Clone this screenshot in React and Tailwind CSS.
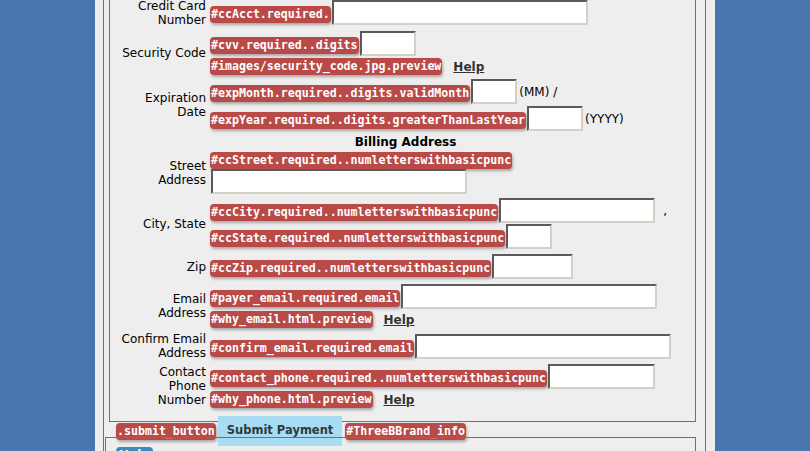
const Tag = ({ children, className = '' }) => (
  <span className={`inline-block whitespace-nowrap rounded-[4px] bg-[#b94a48] px-[1px] font-['DejaVu_Sans_Mono',monospace] text-[11.6px] font-bold leading-[17px] text-white shadow-[1px_2px_3px_rgba(0,0,0,0.3)] ${className}`}>
    {children}
  </span>
)

const Field = ({ className }) => (
  <input
    type="text"
    readOnly
    className={`ml-[1px] block h-[25px] border-2 border-solid border-[#d4d0c8] border-l-[#5a5a5a] border-t-[#5a5a5a] bg-white ${className}`}
  />
)

const Help = () => (
  <a className="ml-[11px] font-bold leading-[14px] text-[#333] underline">Help</a>
)

const Line = ({ className = '', children }) => (
  <div className={`flex items-end ${className}`}>{children}</div>
)

const Row = ({ label, className = '', labelClass = '', children }) => (
  <div className={`flex items-center ${className}`}>
    <div className={`w-[96px] shrink-0 whitespace-nowrap text-right leading-[14px] ${labelClass}`}>{label}</div>
    <div className="ml-[4px] flex flex-col items-start">{children}</div>
  </div>
)

export default function App() {
  return (
    <div className="h-[451px] overflow-hidden bg-[#4a76b0] font-['DejaVu_Sans',Verdana,sans-serif] text-[12px] text-black">
      <div className="ml-[95px] h-full w-[620px] bg-[#eeeeee] pl-[8px] pr-[9px]">
        <div className="h-full border-x border-[#3f7fb0] pl-[5px] pr-[9px]">
          <div className="border-x border-b border-[#3f7fb0] pb-[13px]">
            <Row label={<>Credit Card<br />Number</>} labelClass="-my-[2px]">
              <Line>
                <Tag className="mb-[2px]">#ccAcct.required.</Tag>
                <Field className="w-[256px]" />
              </Line>
            </Row>

            <Row label="Security Code" className="mt-[6px]">
              <Line>
                <Tag className="mb-[2px]">#cvv.required..digits</Tag>
                <Field className="w-[56px]" />
              </Line>
              <div className="mt-[2px] flex items-center">
                <Tag>#images/security_code.jpg.preview</Tag>
                <Help />
              </div>
            </Row>

            <Row label={<>Expiration<br />Date</>} className="mt-[4px]">
              <Line>
                <Tag className="mb-[2px]">#expMonth.required..digits.validMonth</Tag>
                <Field className="w-[46px]" />
                <span className="mb-[5px] ml-[2px] leading-[14px]">(MM) /</span>
              </Line>
              <Line className="mt-[2px]">
                <Tag className="mb-[2px]">#expYear.required..digits.greaterThanLastYear</Tag>
                <Field className="w-[56px]" />
                <span className="mb-[5px] ml-[2px] leading-[14px]">(YYYY)</span>
              </Line>
            </Row>

            <div className="mt-[4px] pl-[6px] text-center font-bold leading-[14px]">Billing Address</div>

            <Row label={<>Street<br />Address</>} className="mt-[3px]">
              <Tag>#ccStreet.required..numletterswithbasicpunc</Tag>
              <Field className="ml-0 w-[256px]" />
            </Row>

            <Row label="City, State" className="mt-[4px]">
              <Line>
                <Tag className="mb-[2px]">#ccCity.required..numletterswithbasicpunc</Tag>
                <Field className="w-[156px]" />
                <span className="mb-[5px] ml-[8px] leading-[14px]">,</span>
              </Line>
              <Line className="mt-[1px]">
                <Tag className="mb-[2px]">#ccState.required..numletterswithbasicpunc</Tag>
                <Field className="w-[46px]" />
              </Line>
            </Row>

            <Row label="Zip" className="mt-[5px]">
              <Line>
                <Tag className="mb-[2px]">#ccZip.required..numletterswithbasicpunc</Tag>
                <Field className="w-[81px]" />
              </Line>
            </Row>

            <Row label={<>Email<br />Address</>} className="mt-[5px]">
              <Line>
                <Tag className="mb-[2px]">#payer_email.required.email</Tag>
                <Field className="w-[256px]" />
              </Line>
              <div className="mt-[2px] flex items-center">
                <Tag>#why_email.html.preview</Tag>
                <Help />
              </div>
            </Row>

            <Row label={<>Confirm Email<br />Address</>} className="mt-[4px]">
              <Line>
                <Tag className="mb-[2px]">#confirm_email.required.email</Tag>
                <Field className="w-[256px]" />
              </Line>
            </Row>

            <Row label={<>Contact<br />Phone<br />Number</>} className="mt-[4px]">
              <Line>
                <Tag className="mb-[2px]">#contact_phone.required..numletterswithbasicpunc</Tag>
                <Field className="w-[107px]" />
              </Line>
              <div className="mt-[2px] flex items-center">
                <Tag>#why_phone.html.preview</Tag>
                <Help />
              </div>
            </Row>
          </div>

          <div className="-mt-[6px] flex items-center pl-[7px]">
            <Tag>.submit_button</Tag>
            <button className="ml-[2px] h-[30px] bg-[#a8dcf2] px-[9px] text-[11.5px] font-bold text-[#2b3b3b]">
              Submit Payment
            </button>
            <Tag className="ml-[3px]">#ThreeBBrand_info</Tag>
          </div>

          <div className="relative -ml-[4px] -mt-[9px] h-[60px] border-x border-t border-[#3f7fb0] pl-[10px] pt-[8px]">
            <div className="inline-block rounded-[4px] bg-[#3a8dbb] px-[3px] font-bold leading-[16px] text-white">Help</div>
          </div>
        </div>
      </div>
    </div>
  )
}
